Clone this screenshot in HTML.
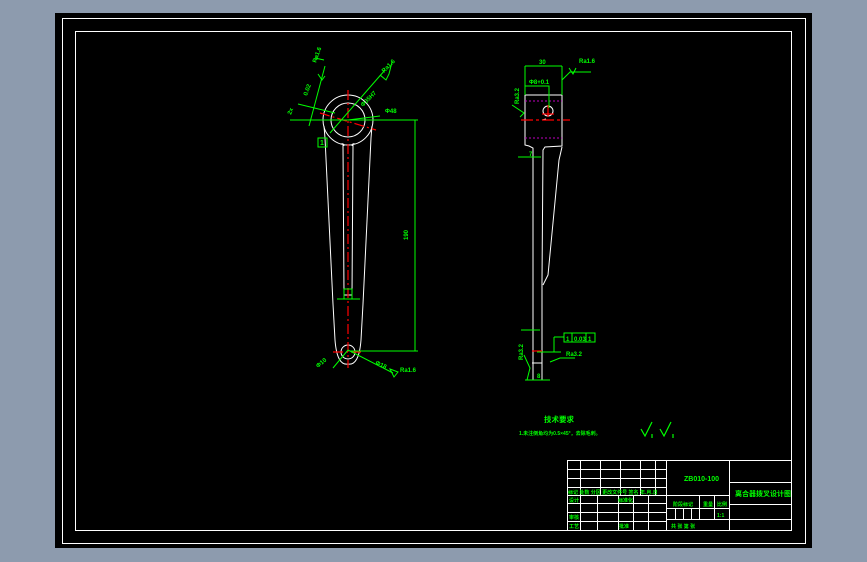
<!DOCTYPE html>
<html><head><meta charset="utf-8"><style>
html,body{margin:0;padding:0;width:867px;height:562px;overflow:hidden;background:#8d9bae;}
svg{position:absolute;left:0;top:0}
text{font-family:"Liberation Sans","Noto Sans CJK SC",sans-serif;fill:#00ff00;font-weight:bold}
</style></head><body>
<svg width="867" height="562" viewBox="0 0 867 562">
<rect x="55" y="13" width="757" height="535" fill="#000"/>
<rect x="62.5" y="18.5" width="743" height="525" fill="none" stroke="#fff" stroke-width="1"/>
<rect x="75.5" y="31.5" width="716" height="499" fill="none" stroke="#fff" stroke-width="1"/>

<!-- main view -->
<g fill="none" stroke="#fff" stroke-width="1">
<circle cx="348" cy="120" r="25"/>
<circle cx="348" cy="120" r="17"/>
<path d="M324 126 L325 138 L333 304 L335 340 Q337 366 348 364 Q359 366 361 340 L363 304 L371 138 L372 126"/>
<path d="M343 145 L344 295 L352 295 L353 145"/>
<path d="M341 144 Q344 143 344 146 M355 144 Q352 143 352 146"/>
<circle cx="348" cy="352" r="7"/>
</g>
<g stroke="#f00" stroke-width="1.2" stroke-dasharray="10,3,2,3">
<line x1="348" y1="90" x2="348" y2="368"/>
<line x1="320" y1="113" x2="376" y2="130"/>
<line x1="333" y1="352" x2="362" y2="352"/>
</g>
<g stroke="#00ff00" stroke-width="1" fill="none">
<line x1="290" y1="120" x2="418" y2="120"/>
<line x1="415" y1="120" x2="415" y2="351"/>
<line x1="350" y1="351" x2="418" y2="351"/>
<line x1="298" y1="104" x2="335" y2="113"/>
<line x1="309" y1="126" x2="325" y2="66"/>
<path d="M318 74 L322 80 L325 76 M315 58 L324 60"/>
<line x1="330" y1="133" x2="385" y2="70"/>
<path d="M380 75 L386 80 L389 74 L392 62"/>
<line x1="348" y1="120" x2="380" y2="116"/>
<rect x="318" y="138" width="9" height="9"/>
<rect x="344" y="289" width="8" height="10"/>
<line x1="337" y1="299" x2="360" y2="299"/>
<line x1="333" y1="368" x2="348" y2="350"/>
<line x1="348" y1="350" x2="393" y2="373"/>
<path d="M390 369 L398 372 L394 377 Z"/>
</g>
<g font-size="6">
<text x="316" y="63" transform="rotate(-70 316 63)">Ra1.6</text>
<text x="384" y="73" transform="rotate(-45 384 73)">Ra1.6</text>
<text x="307" y="96" transform="rotate(-70 307 96)">0.02</text>
<text x="363" y="107" transform="rotate(-45 363 107)">Φ35H7</text>
<text x="291" y="115" transform="rotate(-70 291 115)">2x</text>
<text x="385" y="113">Φ48</text>
<text x="320" y="145" font-size="7">1</text>
<text x="408" y="240" transform="rotate(-90 408 240)">190</text>
<text x="318" y="368" transform="rotate(-40 318 368)">Φ10</text>
<text x="375" y="364" transform="rotate(25 375 364)">Φ18</text>
<text x="400" y="372">Ra1.6</text>
</g>

<!-- side view -->
<g fill="none" stroke="#fff" stroke-width="1">
<path d="M525 95 L562 95 L562 146 L545 147 L543 150 L542 281 L542 363 M525 95 L525 145 L529 146 L533 148 L533 363"/>
<path d="M562 147 L559 160 L548 275 L543 285"/>
<path d="M542 120 L546 119"/>
<path d="M532 363 L542 363 L542 380 M533 363 L533 380"/>
<circle cx="548" cy="111" r="5"/>
</g>
<g stroke="#c000c0" stroke-width="1" stroke-dasharray="2,2">
<line x1="525" y1="101" x2="562" y2="101"/>
<line x1="525" y1="138" x2="562" y2="138"/>
</g>
<g stroke="#f00" stroke-width="1.2">
<line x1="521" y1="120" x2="570" y2="120" stroke-dasharray="12,3,3,3"/>
<line x1="548" y1="105" x2="548" y2="117"/>
<line x1="542" y1="114" x2="554" y2="114"/>
<line x1="532" y1="351" x2="542" y2="351"/>
</g>
<g stroke="#00ff00" stroke-width="1" fill="none">
<path d="M525 95 L525 66 M562 95 L562 66 M525 66 L562 66"/>
<path d="M525 86 L549 86 L549 108"/>
<path d="M562 80 L570 72 L591 72"/>
<path d="M569 68 L573 74 L576 68"/>
<path d="M512 105 L524 113 L520 117"/>
<line x1="518" y1="157" x2="541" y2="157"/>
<line x1="521" y1="330" x2="540" y2="330"/>
<line x1="554" y1="337" x2="554" y2="352"/>
<line x1="554" y1="337" x2="564" y2="337"/>
<rect x="564" y="333" width="31" height="9"/>
<path d="M572 333 V342 M586 333 V342"/>
<line x1="537" y1="352" x2="561" y2="352"/>
<path d="M550 362 L560 358 L575 358"/>
<path d="M524 355 L530 368 L527 380 M525 380 L550 380"/>
</g>
<g font-size="6">
<text x="539" y="64">30</text>
<text x="529" y="84">Φ8+0.1</text>
<text x="579" y="63">Ra1.6</text>
<text x="519" y="104" transform="rotate(-90 519 104)">Ra3.2</text>
<text x="566" y="341">1</text>
<text x="574" y="341">0.03</text>
<text x="588" y="341">1</text>
<text x="566" y="356">Ra3.2</text>
<text x="523" y="360" transform="rotate(-90 523 360)">Ra3.2</text>
<text x="537" y="378">8</text>
<text x="529" y="156">7</text>
</g>

<!-- tech requirements -->
<text x="544" y="422" font-size="7.5">技术要求</text>
<text x="519" y="435" font-size="5">1.未注倒角均为0.5×45°，去除毛刺。</text>
<g stroke="#00ff00" fill="none" stroke-width="1.2">
<path d="M641 429 L645 436 L652 422 M652 434 V438"/>
<path d="M660 429 L664 436 L671 422 M673 434 V438"/>
</g>

<!-- title block -->
<g stroke="#fff" stroke-width="1" fill="none">
<rect x="567.5" y="460.5" width="224" height="70"/>
<line x1="666.5" y1="460" x2="666.5" y2="530"/>
<line x1="729.5" y1="460" x2="729.5" y2="530"/>
<path d="M567 469.5 H666 M567 478.5 H666 M567 487.5 H666 M567 495.5 H729 M567 503.5 H666 M567 512.5 H666 M567 521.5 H666"/>
<path d="M580.5 460 V495 M600.5 460 V495 M620.5 460 V495 M640.5 460 V495 M655.5 460 V495"/>
<path d="M580.5 495 V530 M597.5 495 V530 M618.5 495 V530 M633.5 495 V530 M648.5 495 V530"/>
<path d="M666 508.5 H729 M666 519.5 H729"/>
<path d="M699.5 495 V519 M714.5 495 V519"/>
<path d="M675.5 508 V519 M683.5 508 V519 M691.5 508 V519"/>
<path d="M729 482.5 H791 M729 504.5 H791 M729 519.5 H791"/>
</g>
<g font-size="6">
<text x="684" y="481" font-size="7">ZB010-100</text>
<text x="735" y="496" font-size="7">离合器拨叉设计图</text>
<text x="568" y="494" font-size="5">标记 处数 分区 更改文件号 签名 年.月.日</text>
<text x="569" y="502" font-size="5">设计</text>
<text x="618" y="502" font-size="5">标准化</text>
<text x="569" y="519" font-size="5">审核</text>
<text x="569" y="528" font-size="5">工艺</text>
<text x="619" y="528" font-size="5">批准</text>
<text x="673" y="506" font-size="5">阶段标记</text>
<text x="703" y="506" font-size="5">重量</text>
<text x="717" y="506" font-size="5">比例</text>
<text x="717" y="517" font-size="5">1:1</text>
<text x="671" y="528" font-size="5">共 张 第 张</text>
</g>
</svg>
</body></html>
